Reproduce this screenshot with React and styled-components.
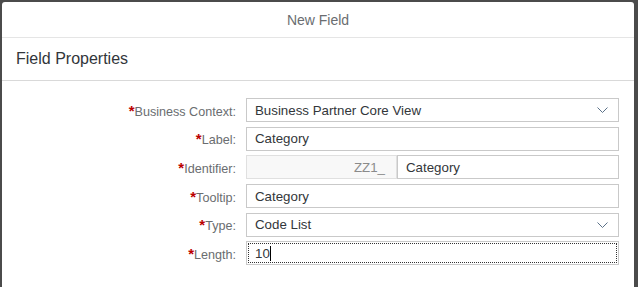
import React from 'react';
import styled, { createGlobalStyle } from 'styled-components';

const GlobalStyle = createGlobalStyle`
	html, body {
		margin: 0;
		padding: 0;
		background: #4b4b4b;
		font-family: 'Liberation Sans', Arial, sans-serif;
	}
`;

const Page = styled.div`
	height: 287px;
	overflow: hidden;
	padding: 2px 4px 0 2px;
	box-sizing: border-box;
`;

const Dialog = styled.section`
	background: #fff;
	height: 100%;
	border-radius: 3px 3px 0 0;
	display: flex;
	flex-direction: column;
`;

const Header = styled.header`
	height: 35px;
	display: flex;
	align-items: center;
	justify-content: center;
	border-bottom: 1px solid #e5e5e5;
	font-size: 14px;
	color: #6a6d70;
`;

const SubHeader = styled.h2`
	margin: 0;
	height: 42px;
	display: flex;
	align-items: center;
	padding-left: 14px;
	border-bottom: 1px solid #d9d9d9;
	font-size: 16px;
	font-weight: normal;
	color: #32363a;
`;

const Form = styled.div`
	display: grid;
	grid-template-columns: 234px 1fr;
	column-gap: 10px;
	row-gap: 4.7px;
	padding: 17px 15px 0 0;
	align-items: center;
`;

const Label = styled.label`
	text-align: right;
	font-size: 12.6px;
	color: #6a6d70;
`;

const Star = styled.span`
	color: #bb0000;
	font-size: 15px;
	font-weight: bold;
`;

const Field = styled.div`
	height: 24px;
	box-sizing: border-box;
	border: 1px solid ${(p) => (p.$disabled ? '#e0e0e0' : '#c9c9c9')};
	background: ${(p) => (p.$disabled ? '#f8f8f8' : '#fff')};
	display: flex;
	align-items: center;
	justify-content: ${(p) => (p.$disabled ? 'flex-end' : 'space-between')};
	padding: 0 ${(p) => (p.$disabled ? '11px' : '8px')};
	font-size: 13.3px;
	color: ${(p) => (p.$disabled ? '#8a8a8a' : '#32363a')};
	flex: ${(p) => (p.$width ? `0 0 ${p.$width}px` : '1')};
	position: relative;
	${(p) =>
		p.$focused &&
		`
		&::after {
			content: '';
			position: absolute;
			inset: 1px;
			border: 1px dotted #333;
		}
	`}
`;

const Pair = styled.div`
	display: flex;
`;

const Caret = styled.span`
	display: inline-block;
	width: 1px;
	height: 15px;
	background: #000;
	vertical-align: -3px;
`;

const Chevron = () => (
	<svg width='11' height='6' viewBox='0 0 11 6' style={{ marginRight: 2 }}>
		<path d='M0.5 0.5 L5.5 5.5 L10.5 0.5' fill='none' stroke='#5b7188' strokeWidth='1' />
	</svg>
);

const Row = ({ label, children }) => (
	<>
		<Label>
			<Star>*</Star>
			{label}:
		</Label>
		{children}
	</>
);

const App = () => (
	<>
		<GlobalStyle />
		<Page>
			<Dialog>
				<Header>New Field</Header>
				<SubHeader>Field Properties</SubHeader>
				<Form>
					<Row label='Business Context'>
						<Field>
							Business Partner Core View
							<Chevron />
						</Field>
					</Row>
					<Row label='Label'>
						<Field>Category</Field>
					</Row>
					<Row label='Identifier'>
						<Pair>
							<Field $disabled $width={151}>
								ZZ1_
							</Field>
							<Field>Category</Field>
						</Pair>
					</Row>
					<Row label='Tooltip'>
						<Field>Category</Field>
					</Row>
					<Row label='Type'>
						<Field>
							Code List
							<Chevron />
						</Field>
					</Row>
					<Row label='Length'>
						<Field $focused>
							<span>
								10
								<Caret />
							</span>
						</Field>
					</Row>
				</Form>
			</Dialog>
		</Page>
	</>
);

export default App;
